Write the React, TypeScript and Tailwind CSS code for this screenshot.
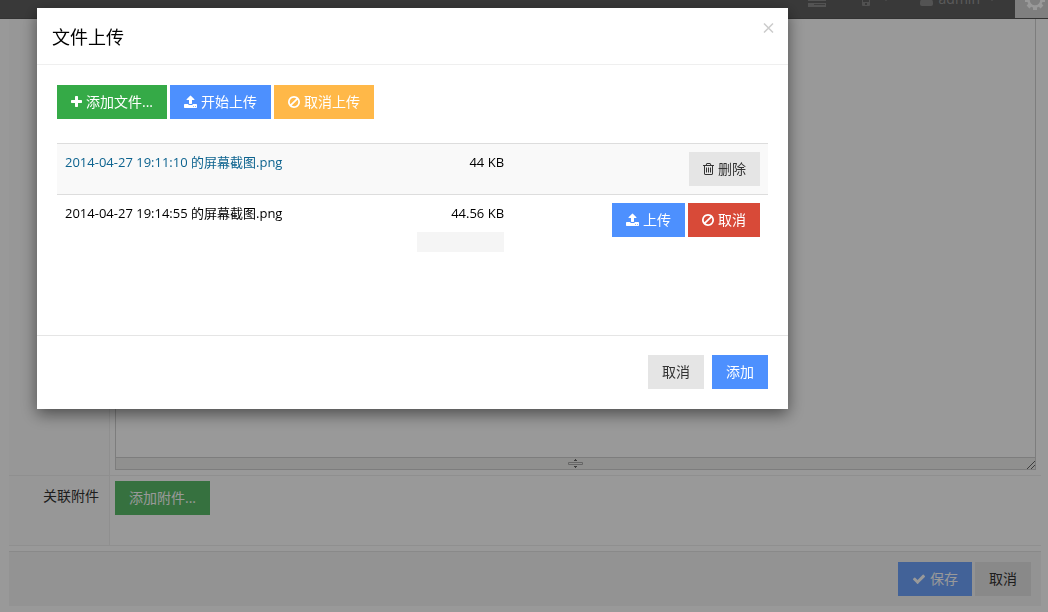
import { ReactNode } from "react";
import { clsx } from "clsx";

const icons = {
  plus: {
    box: "192 0 1408 1792",
    size: "w-[11px]",
    d: "M1600 736v192q0 40-28 68t-68 28h-416v416q0 40-28 68t-68 28h-192q-40 0-68-28t-28-68v-416h-416q-40 0-68-28t-28-68v-192q0-40 28-68t68-28h416v-416q0-40 28-68t68-28h192q40 0 68 28t28 68v416h416q40 0 68 28t28 68z",
  },
  upload: {
    box: "64 0 1664 1792",
    size: "w-[13px]",
    d: "M1344 1472q0-26-19-45t-45-19-45 19-19 45 19 45 45 19 45-19 19-45zm256 0q0-26-19-45t-45-19-45 19-19 45 19 45 45 19 45-19 19-45zm128-224v320q0 40-28 68t-68 28h-1472q-40 0-68-28t-28-68v-320q0-40 28-68t68-28h427q21 56 70.5 92t110.5 36h256q61 0 110.5-36t70.5-92h427q40 0 68 28t28 68zm-325-648q-17 40-59 40h-256v448q0 26-19 45t-45 19h-256q-26 0-45-19t-19-45v-448h-256q-42 0-59-40-17-39 14-69l448-448q18-19 45-19t45 19l448 448q31 30 14 69z",
  },
  ban: {
    box: "128 0 1536 1792",
    size: "w-3",
    d: "M1440 893q0-161-87-295l-754 753q137 89 297 89 111 0 211.5-43.5t173.5-116.5 116-174.5 43-212.5zm-999 299l755-754q-135-91-300-91-148 0-273 73t-198 199-73 274q0 162 89 299zm1223-299q0 157-61 300t-163.5 246-245 164-298.5 61-298.5-61-245-164-163.5-246-61-300 61-299.5 163.5-245.5 245-164 298.5-61 298.5 61 245 164 163.5 245.5 61 299.5z",
  },
  trash: {
    box: "192 0 1408 1792",
    size: "w-[11px]",
    d: "M704 736v576q0 14-9 23t-23 9h-64q-14 0-23-9t-9-23v-576q0-14 9-23t23-9h64q14 0 23 9t9 23zm256 0v576q0 14-9 23t-23 9h-64q-14 0-23-9t-9-23v-576q0-14 9-23t23-9h64q14 0 23 9t9 23zm256 0v576q0 14-9 23t-23 9h-64q-14 0-23-9t-9-23v-576q0-14 9-23t23-9h64q14 0 23 9t9 23zm128 724v-948h-896v948q0 22 7 40.5t14.5 27 10.5 8.5h832q3 0 10.5-8.5t14.5-27 7-40.5zm-672-1076h448l-48-117q-7-9-17-11h-317q-10 2-17 11zm928 32v64q0 14-9 23t-23 9h-96v948q0 83-47 143.5t-113 60.5h-832q-66 0-113-58.5t-47-141.5v-952h-96q-14 0-23-9t-9-23v-64q0-14 9-23t23-9h309l70-167q15-37 54-63t79-26h320q40 0 79 26t54 63l70 167h309q14 0 23 9t9 23z",
  },
  check: {
    box: "0 0 1792 1792",
    size: "w-[14px]",
    d: "M1671 566q0 40-28 68l-724 724-136 136q-28 28-68 28t-68-28l-136-136-362-362q-28-28-28-68t28-68l136-136q28-28 68-28t68 28l294 295 656-657q28-28 68-28t68 28l136 136q28 28 28 68z",
  },
};

const colors = {
  green: "bg-[#35aa47] text-white",
  lightGreen: "bg-[#5bbd6a] text-white",
  blue: "bg-[#4d90fe] text-white",
  softBlue: "bg-[#6ea4fe] text-white",
  yellow: "bg-[#ffb848] text-white",
  red: "bg-[#d84a38] text-white",
  gray: "bg-[#e5e5e5] text-[#333]",
};

interface ButtonProps {
  color: keyof typeof colors;
  icon?: keyof typeof icons;
  children: ReactNode;
}

function Button({ color, icon, children }: ButtonProps) {
  return (
    <button
      type="button"
      className={clsx(
        "inline-flex items-center gap-1 px-[14px] py-[7px] text-sm leading-5 whitespace-nowrap cursor-pointer",
        colors[color]
      )}
    >
      {icon && (
        <svg viewBox={icons[icon].box} fill="currentColor" className={clsx("h-[14px] shrink-0", icons[icon].size)}>
          <path d={icons[icon].d} />
        </svg>
      )}
      {children}
    </button>
  );
}

function Caret() {
  return (
    <svg viewBox="0 0 6 4" fill="currentColor" className="w-[6px] h-1">
      <path d="M0 0h6L3 4z" />
    </svg>
  );
}

function Gear() {
  return (
    <svg viewBox="0 0 20 20" fill="none" stroke="currentColor" className="w-5 h-5">
      <circle cx="10" cy="10" r="6.5" strokeWidth="2.5" />
      <path
        strokeWidth="4"
        d="M10 0v3M10 17v3M0 10h3M17 10h3M3 3l2 2M15 15l2 2M3 17l2-2M15 5l2-2"
      />
    </svg>
  );
}

function TopBar() {
  return (
    <header className="flex items-center justify-end h-[42px] -mt-[23px] pt-[2px] bg-[#606060] border-b border-[#555] text-[#999]">
      <svg viewBox="0 0 18 18" className="w-[18px] h-[18px] mr-9">
        <path fill="#8b8b8b" d="M0 0h18v5H0zM0 7h18v4H0zM0 13h18v4H0z" />
        <path fill="#666" d="M9 2h8v1H9zM9 9h8v1H9zM6 14h11v1H6z" />
      </svg>
      <svg viewBox="0 0 8 14" className="w-2 h-[14px] mr-[13px]">
        <rect width="8" height="14" rx="1" fill="#888" />
        <path fill="#606060" d="M1 2h6v8H1zM3 11h2v2H3z" />
      </svg>
      <Caret />
      <button type="button" className="flex items-center gap-[6px] ml-[31px] mr-5 text-sm leading-5">
        <svg viewBox="0 0 13 14" fill="#8b8b8b" className="w-[13px] h-[14px]">
          <circle cx="6.5" cy="3.5" r="3.5" />
          <path d="M0 11q0-4 3-4h7q3 0 3 4v1q0 2-2 2H2q-2 0-2-2z" />
        </svg>
        admin
        <span className="ml-[3px]">
          <Caret />
        </span>
      </button>
      <button
        type="button"
        aria-label="设置"
        className="flex items-center justify-center w-[33px] h-full pl-[6px] pt-[2px] bg-[#d4d4d4] text-white"
      >
        <Gear />
      </button>
    </header>
  );
}

function Page() {
  return (
    <div className="min-h-screen bg-white overflow-hidden">
      <TopBar />
      <form className="ml-[9px] mr-[7px]">
        <div className="flex border-b border-[#efefef]">
          <div className="w-[101px] shrink-0 border-r border-[#efefef] bg-[#fcfcfc]" />
          <div className="flex-1 px-[5px] pb-[5px]">
            <div className="border-x border-b border-[#d0d0d0]">
              <textarea aria-label="内容" className="block w-full h-[438px] resize-none outline-none" />
              <div className="flex items-center justify-center relative h-[12px] border-t border-[#d0d0d0] bg-[#f0f0ee]">
                <svg viewBox="0 0 15 9" className="w-[15px] h-[9px]">
                  <path fill="#666" d="M7 0h1v1H7zM6 1h3v1H6zM6 7h3v1H6zM7 8h1v1H7z" />
                  <path fill="none" stroke="#aaa" d="M.5 3.5h14v2H.5z" />
                </svg>
                <svg viewBox="0 0 8 8" className="absolute right-0 bottom-0 w-2 h-2">
                  <path stroke="#666" d="M0 8l8-8M4 8l4-4" />
                </svg>
              </div>
            </div>
          </div>
        </div>
        <div className="flex border-b border-[#efefef]">
          <div className="w-[101px] shrink-0 border-r border-[#efefef] bg-[#fcfcfc] pt-[10px] pr-[10px] text-right text-sm leading-5 text-[#333]">
            关联附件
          </div>
          <div className="flex-1 px-[5px] pt-[5px] pb-[30px]">
            <Button color="lightGreen">添加附件...</Button>
          </div>
        </div>
        <div className="flex justify-end gap-[3px] mt-[5px] p-[10px] border-t border-[#e5e5e5] bg-[#f5f5f5]">
          <Button color="softBlue" icon="check">保存</Button>
          <Button color="gray">取消</Button>
        </div>
      </form>
    </div>
  );
}

function UploadDialog() {
  return (
    <div
      role="dialog"
      aria-labelledby="upload-title"
      className="bg-white text-black shadow-[0_5px_15px_rgba(0,0,0,0.5)]"
    >
      <div className="flex items-start justify-between h-[57px] pl-[15px] pr-[14px] pt-[15px] border-b border-[#efefef]">
        <h4 id="upload-title" className="text-lg leading-7">文件上传</h4>
        <button type="button" aria-label="关闭" className="cursor-pointer">
          <svg viewBox="0 0 11 10" className="w-[11px] h-[10px]">
            <path stroke="#ccc" strokeWidth="1.5" d="M1 .5l9 9M10 .5l-9 9" />
          </svg>
        </button>
      </div>

      <div className="p-5 min-h-[270px]">
        <div className="flex gap-[3px] mb-6">
          <Button color="green" icon="plus">添加文件...</Button>
          <Button color="blue" icon="upload">开始上传</Button>
          <Button color="yellow" icon="ban">取消上传</Button>
        </div>

        <table className="w-full table-fixed border-collapse text-[13px] leading-5">
          <colgroup>
            <col className="w-[49.5%]" />
            <col className="w-[14.5%]" />
            <col />
          </colgroup>
          <tbody className="[&_td]:p-2 [&_td]:align-top [&_tr]:border-t [&_tr]:border-[#ddd]">
            <tr className="bg-[#f9f9f9]">
              <td>
                <a href="#" className="text-[#0d638f]">2014-04-27 19:11:10 的屏幕截图.png</a>
              </td>
              <td className="text-right">44 KB</td>
              <td>
                <div className="flex justify-end">
                  <Button color="gray" icon="trash">删除</Button>
                </div>
              </td>
            </tr>
            <tr>
              <td>2014-04-27 19:14:55 的屏幕截图.png</td>
              <td className="text-right">
                44.56 KB
                <div className="mt-[9px] h-5 bg-[#f5f5f5]" />
              </td>
              <td>
                <div className="flex justify-end gap-[3px]">
                  <Button color="blue" icon="upload">上传</Button>
                  <Button color="red" icon="ban">取消</Button>
                </div>
              </td>
            </tr>
          </tbody>
        </table>
      </div>

      <div className="flex justify-end gap-2 px-5 pt-[19px] pb-5 border-t border-[#e5e5e5]">
        <Button color="gray">取消</Button>
        <Button color="blue">添加</Button>
      </div>
    </div>
  );
}

export default function App() {
  return (
    <div className="font-['Open_Sans','Noto_Sans_CJK_SC',sans-serif]">
      <Page />
      {/* Backdrop */}
      <div className="fixed inset-0 bg-black/40 pt-2 pl-[37px] pr-[260px]">
        <UploadDialog />
      </div>
    </div>
  );
}
